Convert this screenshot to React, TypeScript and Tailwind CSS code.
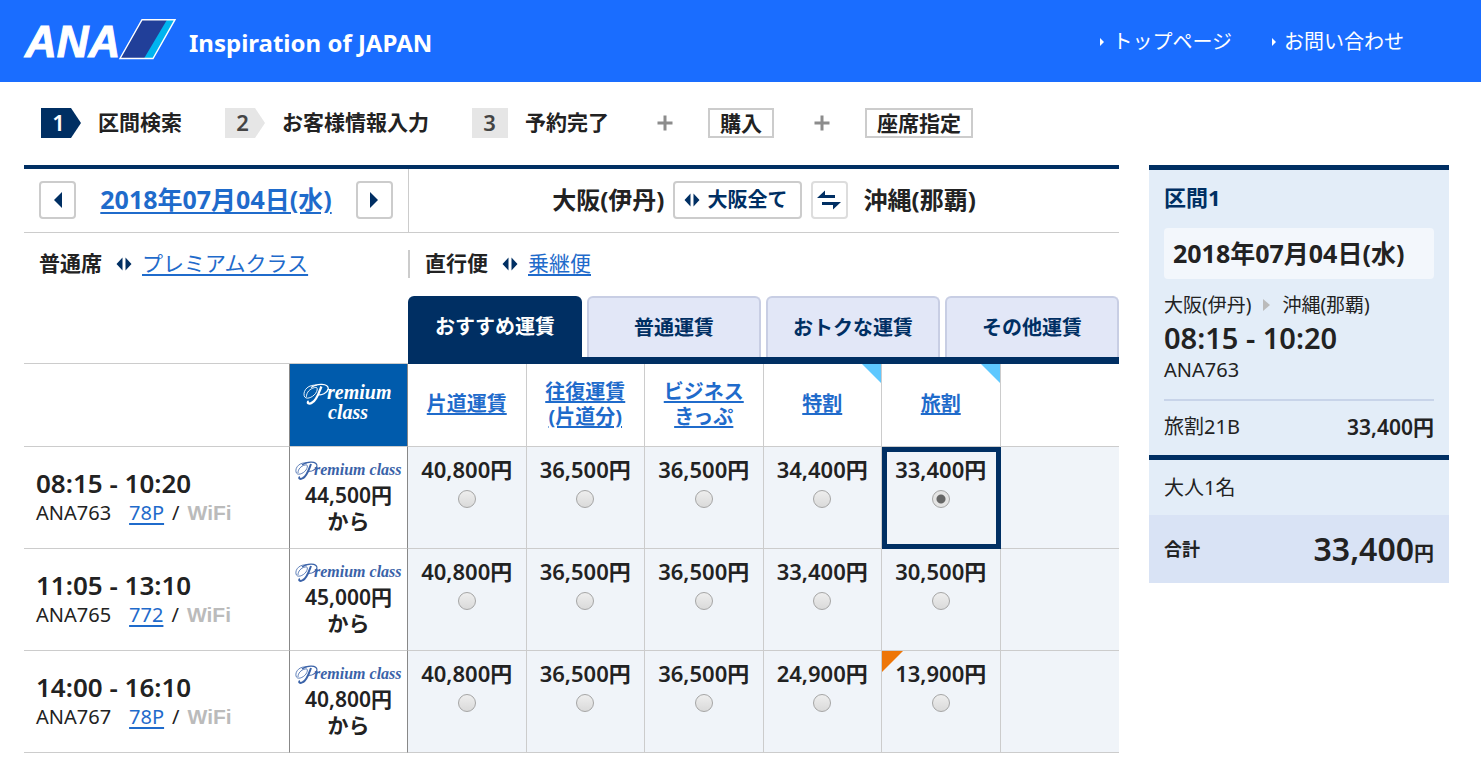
import { useState } from 'react'

const fares = [
  { label: ['片道運賃'], discount: false },
  { label: ['往復運賃', '(片道分)'], discount: false },
  { label: ['ビジネス', 'きっぷ'], discount: false },
  { label: ['特割'], discount: true },
  { label: ['旅割'], discount: true },
]

const flights = [
  {
    no: 'ANA763',
    time: '08:15 - 10:20',
    aircraft: '78P',
    premium: '44,500',
    prices: ['40,800', '36,500', '36,500', '34,400', '33,400'],
    lowSeats: -1,
  },
  {
    no: 'ANA765',
    time: '11:05 - 13:10',
    aircraft: '772',
    premium: '45,000',
    prices: ['40,800', '36,500', '36,500', '33,400', '30,500'],
    lowSeats: -1,
  },
  {
    no: 'ANA767',
    time: '14:00 - 16:10',
    aircraft: '78P',
    premium: '40,800',
    prices: ['40,800', '36,500', '36,500', '24,900', '13,900'],
    lowSeats: 4,
  },
]

const tabs = ['おすすめ運賃', '普通運賃', 'おトクな運賃', 'その他運賃']

function AnaLogo() {
  return (
    <svg width="153" height="44" viewBox="0 0 153 44" className="overflow-visible" role="img" aria-label="ANA">
      <text x="1" y="38" fill="#fff" stroke="#fff" strokeWidth="1" fontFamily="Liberation Sans, sans-serif" fontWeight="700" fontStyle="italic" fontSize="44">
        ANA
      </text>
      <path d="M118 0.700 H151 L129 39.500 H96 Z" fill="#213f99" />
      <path d="M143 0.700 H151 L129 39.500 H120 Z" fill="#00b4ef" />
      <path d="M118 0.700 H151 L129 39.500 H96 Z" fill="none" stroke="#fff" strokeWidth="1.4" />
    </svg>
  )
}

function PremiumSwirl() {
  return (
    <g fill="none" stroke="currentColor" strokeWidth="0.8">
      <path d="M12 2 C5 1 0 6 1 11 C2 15 8 13 11 9 C13 6 13 3 10 4 C6 5 3 8 3 12" />
      <path d="M7 4 C12 0 22 0 22 5 C21 9 16 11 13 10" strokeWidth="1.1" />
      <path d="M16 3 C14 8 12 15 8 17 C5 19 3 17 5 16" strokeWidth="2" />
    </g>
  )
}

function PremiumSmall() {
  return (
    <svg width="108" height="21" viewBox="0 0 108 21" className="text-[#3a62a8]" role="img" aria-label="Premium class">
      <PremiumSwirl />
      <text x="19" y="14" fill="currentColor" fontFamily="Liberation Serif, serif" fontWeight="700" fontStyle="italic" fontSize="16">
        remium class
      </text>
    </svg>
  )
}

function PremiumLarge() {
  return (
    <svg width="92" height="44" viewBox="0 0 92 44" className="text-white" role="img" aria-label="Premium class">
      <g transform="scale(1.15)">
        <PremiumSwirl />
      </g>
      <g fill="currentColor" fontFamily="Liberation Serif, serif" fontWeight="700" fontStyle="italic" fontSize="20">
        <text x="24" y="16">remium</text>
        <text x="25" y="36">class</text>
      </g>
    </svg>
  )
}

function BothWays() {
  return (
    <svg width="16" height="14" viewBox="0 0 16 14" fill="#002f63" aria-hidden="true">
      <path d="M6.500 0.500 V13.500 L0.500 7 Z M9.500 0.500 V13.500 L15.500 7 Z" />
    </svg>
  )
}

function Plus() {
  return (
    <svg width="16" height="16" viewBox="0 0 16 16" stroke="#8c8c8c" strokeWidth="3" aria-hidden="true">
      <path d="M8 0.500 V15.500 M0.500 8 H15.500" />
    </svg>
  )
}

function StepNumber({ n, active, last }: { n: number; active?: boolean; last?: boolean }) {
  return (
    <span className={`relative flex h-[30px] items-center ${last ? 'w-9' : 'w-10'} ${active ? 'text-white' : 'text-[#444]'}`}>
      <svg className="absolute inset-0" width="40" height="30" viewBox="0 0 40 30" fill={active ? '#002f63' : '#e6e6e6'} aria-hidden="true">
        <path d={last ? 'M0 0 H36 V30 H0 Z' : 'M0 0 H30 L40 15 L30 30 H0 Z'} />
      </svg>
      <span className="relative w-[35px] text-center text-[22px] font-semibold">{n}</span>
    </span>
  )
}

function TopBar() {
  return (
    <header className="flex h-[82px] items-center justify-between bg-[#1a6dff] pr-[77px] pl-6 text-white">
      <a href="#" className="flex items-center gap-3">
        <AnaLogo />
        <span className="pt-1 font-['Noto_Sans'] text-[24px] font-bold">Inspiration of JAPAN</span>
      </a>
      <nav className="flex gap-10 pt-[2px] text-xl">
        {['トップページ', 'お問い合わせ'].map(label => (
          <a key={label} href="#" className="flex items-center gap-2">
            <svg width="4" height="8" viewBox="0 0 4 8" fill="#fff" aria-hidden="true">
              <path d="M0 0 L4 4 L0 8 Z" />
            </svg>
            {label}
          </a>
        ))}
      </nav>
    </header>
  )
}

function Steps() {
  return (
    <ol className="flex h-[83px] items-center pb-[2px] pl-[41px] text-[21px] font-bold">
      <li className="flex items-center gap-[17px]">
        <StepNumber n={1} active />
        区間検索
      </li>
      <li className="ml-[43px] flex items-center gap-[17px]">
        <StepNumber n={2} />
        お客様情報入力
      </li>
      <li className="ml-[43px] flex items-center gap-[17px]">
        <StepNumber n={3} last />
        予約完了
      </li>
      <li className="ml-12 flex items-center gap-[35px]">
        <Plus />
        <span className="border-2 border-[#ccc] px-[10px] leading-[26px]">購入</span>
      </li>
      <li className="ml-10 flex items-center gap-[35px]">
        <Plus />
        <span className="border-2 border-[#ccc] px-[10px] leading-[26px]">座席指定</span>
      </li>
    </ol>
  )
}

function DayButton({ label, d }: { label: string; d: string }) {
  return (
    <button aria-label={label} className="flex h-[38px] w-[37px] items-center justify-center rounded border-2 border-[#ccc] bg-white">
      <svg width="10" height="16" viewBox="0 0 10 16" fill="#002f63" aria-hidden="true">
        <path d={d} />
      </svg>
    </button>
  )
}

function RouteBar() {
  return (
    <div className="grid grid-cols-[384px_1fr] border-t-4 border-[#002f63]">
      <div className="flex h-16 items-center justify-between border-b border-[#ccc] px-[15px] pb-[2px]">
        <DayButton label="前の日" d="M9 0 V16 L1 8 Z" />
        <a href="#" className="text-[25px] font-bold text-[#1f6bcb] underline underline-offset-3">2018年07月04日(水)</a>
        <DayButton label="次の日" d="M1 0 V16 L9 8 Z" />
      </div>
      <div className="flex items-center justify-center border-b border-l border-[#ccc] pb-[2px] text-[24px] font-bold">
        大阪(伊丹)
        <button className="ml-2 flex h-[38px] items-center gap-2 rounded border-2 border-[#ccc] pr-3 pl-[9px] text-[20px] text-[#002f63]">
          <BothWays />
          大阪全て
        </button>
        <button aria-label="出発地と到着地を入れ替え" className="mr-4 ml-[9px] flex h-[38px] w-[37px] items-center justify-center rounded border-2 border-[#ddd]">
          <svg width="24" height="20" viewBox="0 0 24 20" fill="#002f63" aria-hidden="true">
            <path d="M0 8 L8 0.500 V5 H18 V8 Z M24 12 L16 19.500 V15 H5 V12 Z" />
          </svg>
        </button>
        沖縄(那覇)
      </div>
      <div className="flex h-[63px] items-center gap-[14px] pb-[2px] pl-[15px] text-[21px]">
        <strong>普通席</strong>
        <BothWays />
        <a href="#" className="-ml-1 text-[#1f6bcb] underline underline-offset-3">プレミアムクラス</a>
      </div>
      <div className="flex items-center pb-[2px]">
        <div className="flex h-7 items-center gap-[14px] border-l-2 border-[#ccc] pl-[15px] text-[21px]">
          <strong>直行便</strong>
          <BothWays />
          <a href="#" className="-ml-1 text-[#1f6bcb] underline underline-offset-3">乗継便</a>
        </div>
      </div>
    </div>
  )
}

function FareTabs() {
  return (
    <div className="grid grid-cols-[384px_1fr]">
      <div className="border-b border-[#ccc]" />
      <div role="tablist" className="grid grid-cols-4 gap-x-[5px] border-b-7 border-[#002f63] text-[20px] font-bold">
        {tabs.map((tab, i) => (
          <button
            key={tab}
            role="tab"
            aria-selected={i === 0}
            className={`h-[61px] rounded-t-md ${i === 0 ? 'bg-[#002f63] text-white' : 'border-2 border-b-0 border-[#c8cee4] bg-[#e2e7f7] text-[#002f63]'}`}
          >
            {tab}
          </button>
        ))}
      </div>
    </div>
  )
}

function FareTable({ selected, onSelect }: { selected: string; onSelect: (key: string) => void }) {
  return (
    <table className="w-full table-fixed border-separate border-spacing-0 text-center">
      <colgroup>
        <col className="w-[266px]" />
        <col className="w-[118px]" />
        <col span={6} />
      </colgroup>
      <thead>
        <tr className="h-[83px]">
          <td className="border-r border-b border-[#ccc] border-r-[#888]" />
          <th className="border-r border-b border-[#ccc] border-r-[#888] bg-[#005bac]">
            <div className="flex justify-center">
              <PremiumLarge />
            </div>
          </th>
          {fares.map(fare => (
            <th key={fare.label[0]} className="relative border-r border-b border-[#ccc] pb-[3px] text-[20px] leading-[25px] font-bold">
              <a href="#" className="text-[#1f6bcb]">
                {fare.label.map(line => (
                  <span key={line} className="block underline underline-offset-2">{line}</span>
                ))}
              </a>
              {fare.discount && (
                <svg className="absolute top-0 right-0" width="19" height="19" viewBox="0 0 19 19" fill="#5ec8ff" aria-hidden="true">
                  <path d="M0 0 H19 V19 Z" />
                </svg>
              )}
            </th>
          ))}
          <td className="border-b border-[#ccc]" />
        </tr>
      </thead>
      <tbody>
        {flights.map(flight => (
          <tr key={flight.no} className="h-[102px]">
            <th className="border-r border-b border-[#ccc] border-r-[#888] pl-3 text-left font-normal">
              <div className="text-[26px] leading-[30px] font-semibold">{flight.time}</div>
              <div className="text-[20px] leading-[30px]">
                {flight.no}
                <a href="#" className="ml-[18px] text-[#1f6bcb] underline underline-offset-3">{flight.aircraft}</a>
                <span className="mx-2">/</span>
                <span className="font-['Liberation_Sans'] text-[21px] font-bold text-[#bbb]">WiFi</span>
              </div>
            </th>
            <td className="border-r border-b border-[#ccc] border-r-[#888] text-[21px] leading-[26px] font-semibold">
              <div className="flex justify-center">
                <PremiumSmall />
              </div>
              <div>{flight.premium}円</div>
              <div>から</div>
            </td>
            {flight.prices.map((price, i) => {
              const key = `${flight.no}-${i}`
              const checked = selected === key
              return (
                <td
                  key={key}
                  className={`relative border-r border-b border-[#ccc] bg-[#f0f4f9] align-top ${checked ? 'outline-[5px] -outline-offset-[5px] outline-[#002f63]' : ''}`}
                >
                  {flight.lowSeats === i && (
                    <svg className="absolute top-0 left-0" width="21" height="21" viewBox="0 0 21 21" fill="#ee7608" aria-hidden="true">
                      <path d="M0 0 H21 L0 21 Z" />
                    </svg>
                  )}
                  <label className="relative flex flex-col items-center pt-[7px] text-[22px] leading-[30px] font-semibold">
                    {price}円
                    <input
                      type="radio"
                      name="fare"
                      checked={checked}
                      onChange={() => onSelect(key)}
                      className="mt-[6px] size-[18px] appearance-none rounded-full border border-[#a5a5a5] bg-linear-to-b from-[#eee] to-[#dadada] checked:bg-[radial-gradient(circle,#666_4px,#e4e4e4_5px)]"
                    />
                  </label>
                </td>
              )
            })}
            <td className="border-b border-[#ccc] bg-[#f0f4f9]" />
          </tr>
        ))}
      </tbody>
    </table>
  )
}

function Summary() {
  return (
    <aside className="w-[300px] shrink-0 border-t-5 border-[#002f63] bg-[#e3edf8]">
      <div className="px-[15px] pb-[13px]">
        <h2 className="pt-[11px] text-[22px] leading-8 font-bold text-[#002f63]">区間1</h2>
        <div className="mt-[15px] rounded bg-[#f3f7fc] pl-[9px] text-[25px] leading-[51px] font-bold">2018年07月04日(水)</div>
        <div className="mt-3 flex items-center gap-3 text-[19px] leading-7">
          大阪(伊丹)
          <svg width="7" height="12" viewBox="0 0 7 12" fill="#bbb" aria-hidden="true">
            <path d="M0 0 L7 6 L0 12 Z" />
          </svg>
          沖縄(那覇)
        </div>
        <div className="text-[29px] leading-[38px] font-semibold">08:15 - 10:20</div>
        <div className="text-[20px] leading-[26px]">ANA763</div>
        <div className="mt-4 flex items-center justify-between border-t-2 border-[#c8d4e9] pt-[11px] text-[20px] leading-[30px]">
          <span>旅割21B</span>
          <strong className="text-[21px] font-semibold">33,400円</strong>
        </div>
      </div>
      <div className="border-t-5 border-[#002f63] px-[15px] text-[20px] leading-[55px]">大人1名</div>
      <div className="flex h-[68px] items-center justify-between bg-[#d9e3f5] px-[15px] font-semibold">
        <span className="text-[18px]">合計</span>
        <span className="text-[32px]">
          33,400<span className="text-[20px]">円</span>
        </span>
      </div>
    </aside>
  )
}

export default function App() {
  const [selected, setSelected] = useState('ANA763-4')

  return (
    <div lang="ja" className="bg-white font-['Noto_Sans','Noto_Sans_CJK_JP',sans-serif] text-[#222]">
      <TopBar />
      <Steps />
      <div className="flex items-start gap-[30px] pr-8 pl-6">
        <main className="min-w-0 flex-1">
          <RouteBar />
          <FareTabs />
          <FareTable selected={selected} onSelect={setSelected} />
        </main>
        <Summary />
      </div>
    </div>
  )
}
